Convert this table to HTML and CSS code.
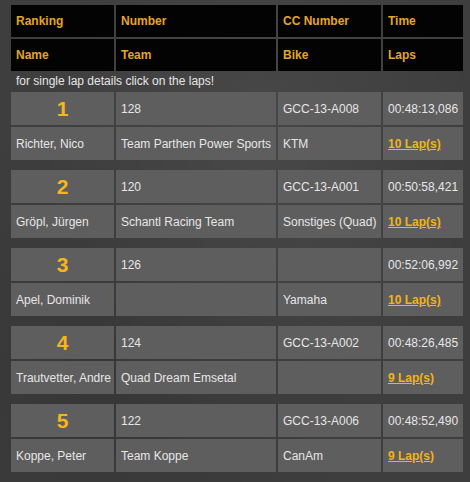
FILE: index.html
```html
<!DOCTYPE html>
<html>
<head>
<meta charset="utf-8">
<link rel="stylesheet" href="styles.css">
</head>
<body>
<div class="board">
  <div class="grid head">
    <div class="cell">Ranking</div>
    <div class="cell">Number</div>
    <div class="cell">CC Number</div>
    <div class="cell">Time</div>
    <div class="cell">Name</div>
    <div class="cell">Team</div>
    <div class="cell">Bike</div>
    <div class="cell">Laps</div>
  </div>
  <p class="note">for single lap details click on the laps!</p>

  <div class="grid entry">
    <div class="cell rank">1</div>
    <div class="cell">128</div>
    <div class="cell">GCC-13-A008</div>
    <div class="cell">00:48:13,086</div>
    <div class="cell">Richter, Nico</div>
    <div class="cell">Team Parthen Power Sports</div>
    <div class="cell">KTM</div>
    <div class="cell"><a class="laps" href="#">10 Lap(s)</a></div>
  </div>

  <div class="grid entry">
    <div class="cell rank">2</div>
    <div class="cell">120</div>
    <div class="cell">GCC-13-A001</div>
    <div class="cell">00:50:58,421</div>
    <div class="cell">Gröpl, Jürgen</div>
    <div class="cell">Schantl Racing Team</div>
    <div class="cell">Sonstiges (Quad)</div>
    <div class="cell"><a class="laps" href="#">10 Lap(s)</a></div>
  </div>

  <div class="grid entry">
    <div class="cell rank">3</div>
    <div class="cell">126</div>
    <div class="cell"></div>
    <div class="cell">00:52:06,992</div>
    <div class="cell">Apel, Dominik</div>
    <div class="cell"></div>
    <div class="cell">Yamaha</div>
    <div class="cell"><a class="laps" href="#">10 Lap(s)</a></div>
  </div>

  <div class="grid entry">
    <div class="cell rank">4</div>
    <div class="cell">124</div>
    <div class="cell">GCC-13-A002</div>
    <div class="cell">00:48:26,485</div>
    <div class="cell">Trautvetter, Andre</div>
    <div class="cell">Quad Dream Emsetal</div>
    <div class="cell"></div>
    <div class="cell"><a class="laps" href="#">9 Lap(s)</a></div>
  </div>

  <div class="grid entry">
    <div class="cell rank">5</div>
    <div class="cell">122</div>
    <div class="cell">GCC-13-A006</div>
    <div class="cell">00:48:52,490</div>
    <div class="cell">Koppe, Peter</div>
    <div class="cell">Team Koppe</div>
    <div class="cell">CanAm</div>
    <div class="cell"><a class="laps" href="#">9 Lap(s)</a></div>
  </div>
</div>
</body>
</html>
```
FILE: styles.css
```css
html, body {
  margin: 0;
  height: 100%;
}
body {
  background-color: #3e3e3e;
  background-image:
    radial-gradient(ellipse at 55% 30%, rgba(255,255,255,0.05), rgba(255,255,255,0) 60%),
    radial-gradient(ellipse at 20% 80%, rgba(0,0,0,0.12), rgba(0,0,0,0) 50%);
  font-family: "Liberation Sans", Arial, sans-serif;
  font-size: 12px;
  color: #e6e6e6;
  padding: 5px 0 0 11px;
  box-sizing: border-box;
}
.board {
  width: 452px;
}
.grid {
  display: grid;
  grid-template-columns: 103px 160px 103px 80px;
  grid-auto-rows: 33px;
  gap: 2px;
}
.cell {
  display: flex;
  align-items: center;
  padding: 0 5px;
  background: #5e5e5e;
  white-space: nowrap;
  overflow: hidden;
}
.head {
  grid-auto-rows: 32px;
}
.head .cell {
  background: #030303;
  color: #e3a52a;
  font-weight: bold;
}
.note {
  margin: 0;
  height: 21px;
  line-height: 20px;
  padding: 0 0 0 5px;
  color: #e6e6e6;
}
.entry {
  margin-bottom: 10px;
}
.rank {
  justify-content: center;
  color: #f5b61a;
  font-weight: bold;
  font-size: 21px;
}
.laps {
  color: #f0b31c;
  font-weight: bold;
  text-decoration: underline;
}
```
